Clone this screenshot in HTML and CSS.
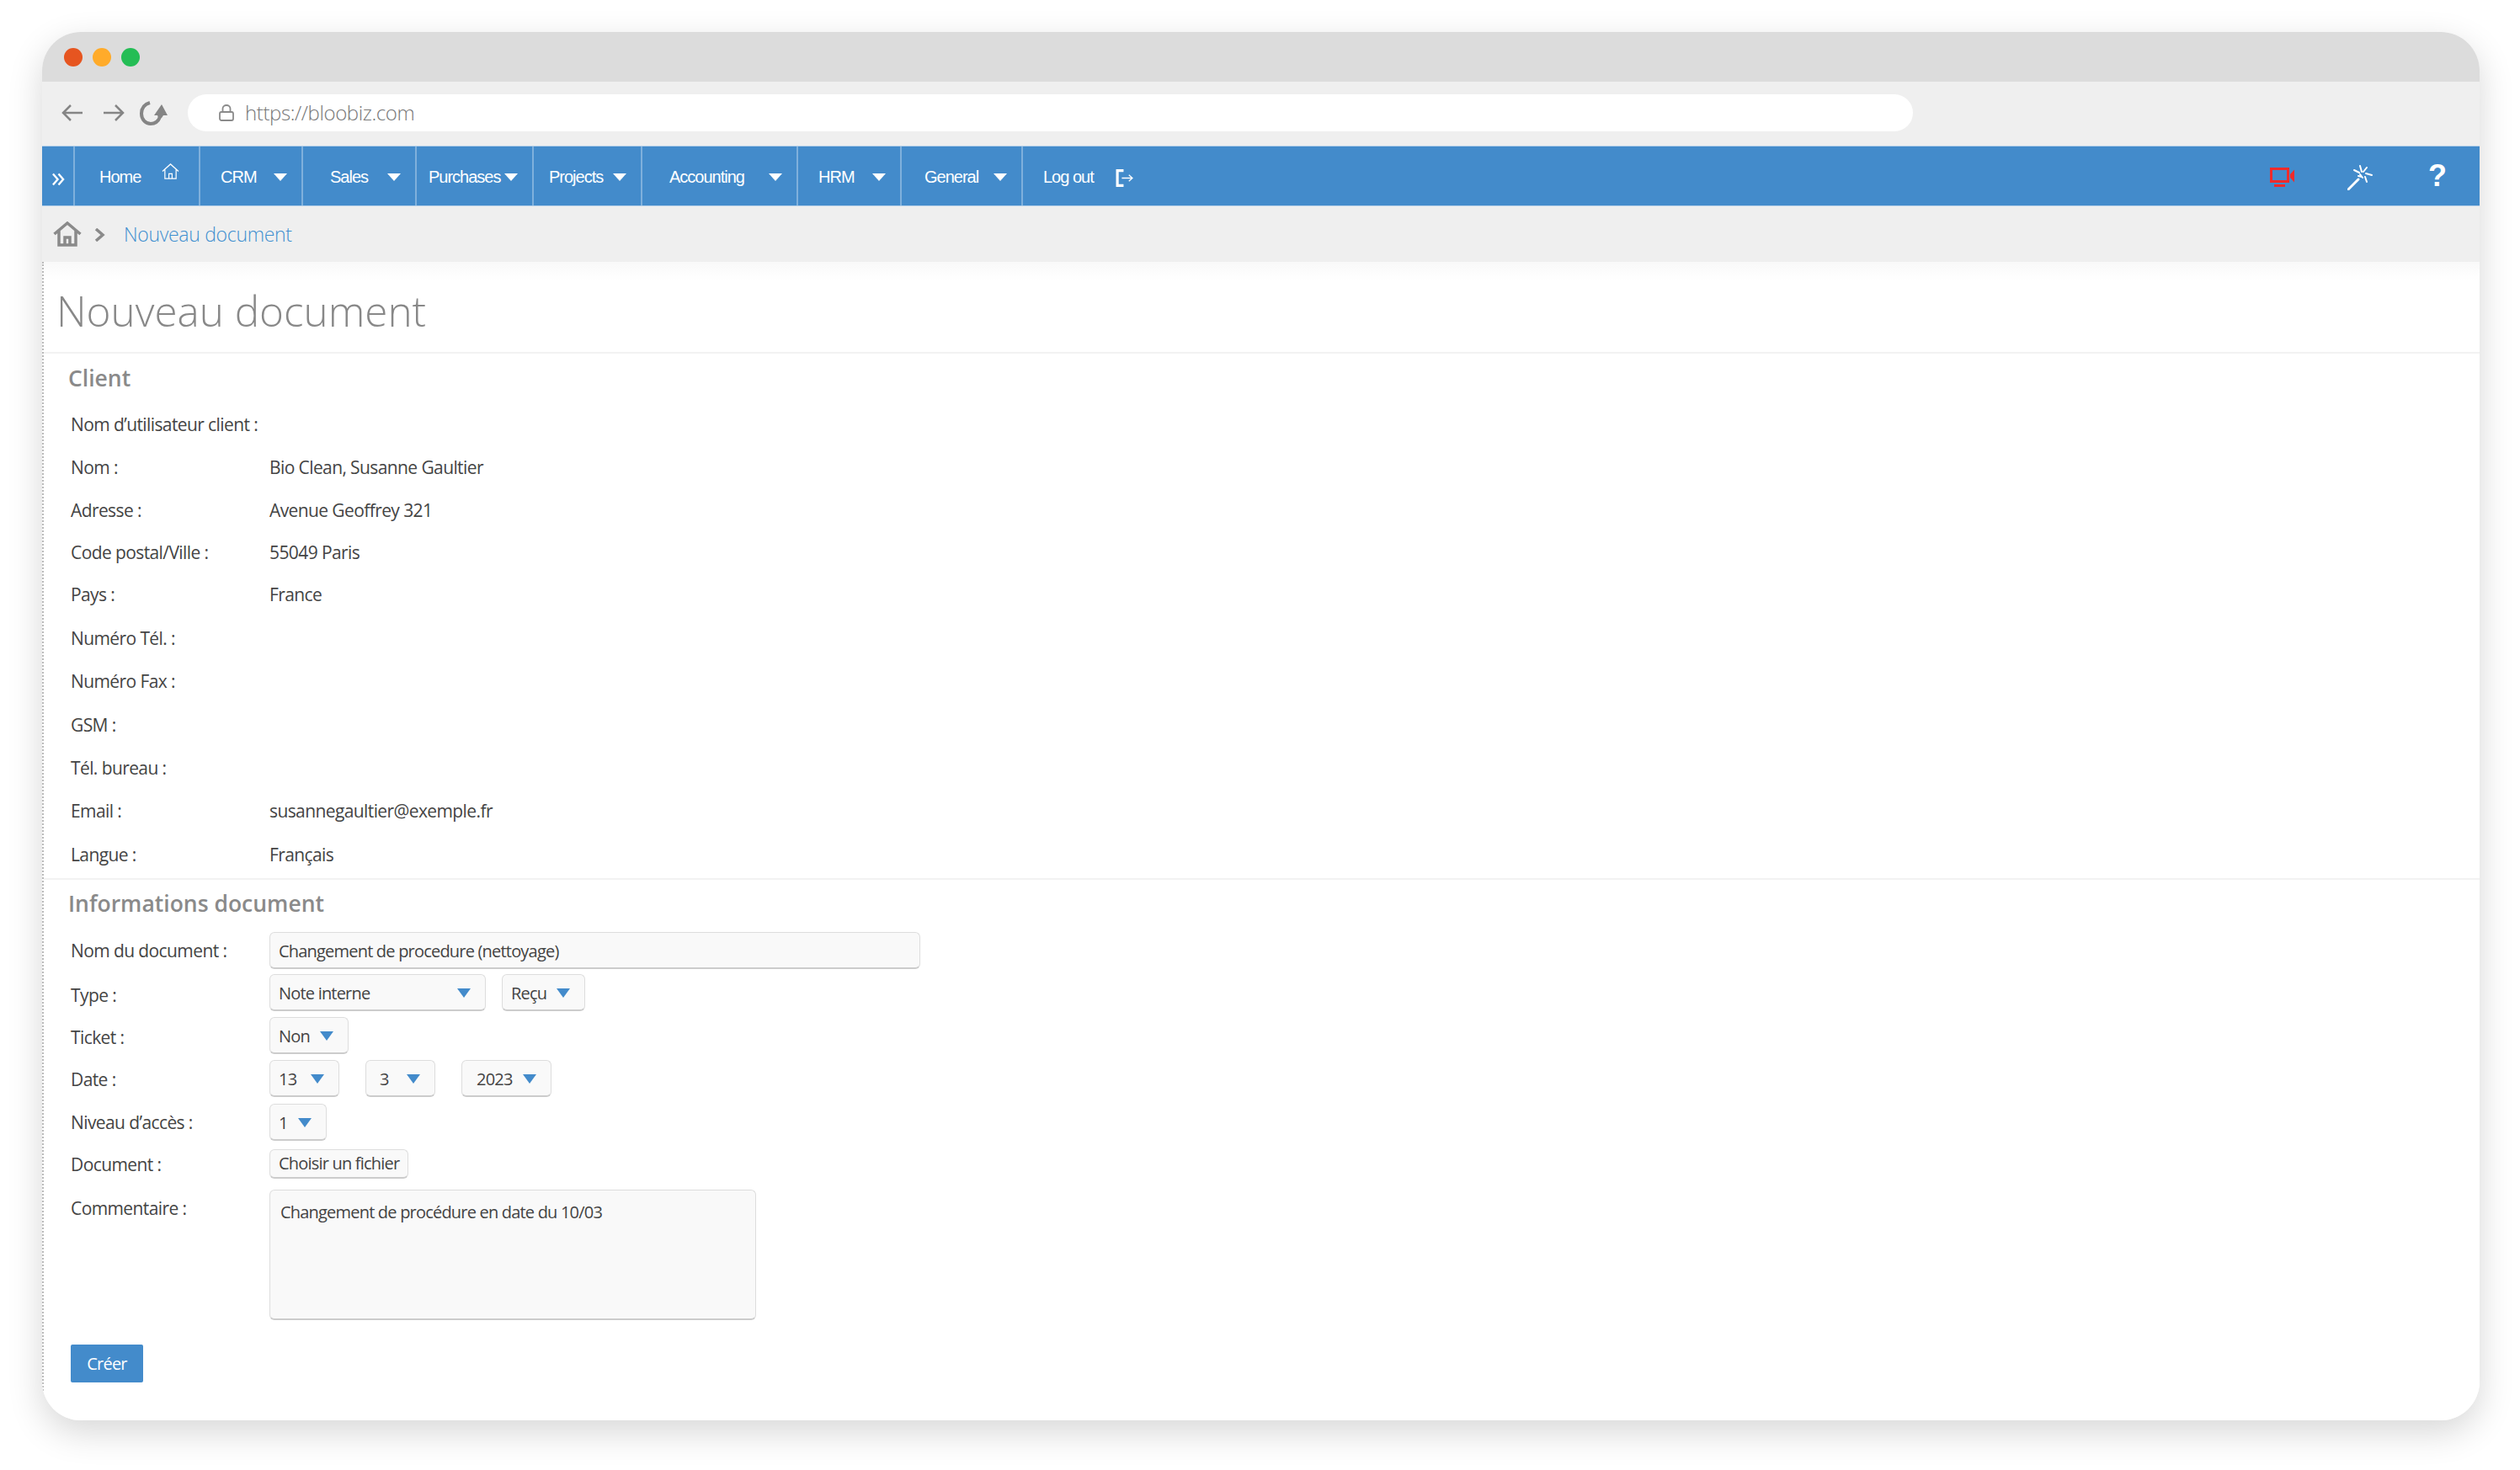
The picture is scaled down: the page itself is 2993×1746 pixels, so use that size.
FILE: index.html
```html
<!DOCTYPE html>
<html lang="fr">
<head>
<meta charset="utf-8">
<title>Nouveau document</title>
<link rel="stylesheet" href="styles.css">
</head>
<body>
<div class="window">
  <div class="titlebar">
    <span class="dot dot-red"></span><span class="dot dot-amber"></span><span class="dot dot-green"></span>
  </div>
  <div class="toolbar">
    <svg class="tool-arrow" viewBox="0 0 26 22"><path d="M25 11H2M11 2l-9 9 9 9"/></svg>
    <svg class="tool-arrow tool-forward" viewBox="0 0 26 22"><path d="M1 11h23M15 2l9 9-9 9"/></svg>
    <svg class="tool-reload" viewBox="0 0 34 30"><path class="reload-arc" d="M13 3C6 5 3 10 3 16c0 7 5 12 11 12 5 0 9-3 11-8"/><path class="reload-head" d="M27 5l7 13h-5l-2 3h-4l-1-3h-4z"/></svg>
    <div class="urlbar">
      <svg class="lock" viewBox="0 0 18 20"><rect x="1" y="9" width="16" height="10" rx="2"/><path d="M4.500 9V5a4.500 4 0 0 1 9 0v4"/></svg>
      <span class="url">https://bloobiz.com</span>
    </div>
  </div>

  <nav class="nav">
    <a class="nav-item nav-toggle">
      <svg class="double-chevron" viewBox="0 0 16 16"><path d="M1 1l6 7-6 7M8 1l6 7-6 7"/></svg>
    </a>
    <a class="nav-item nav-home"><span>Home</span>
      <svg class="home-small" viewBox="0 0 22 20"><path d="M1 10L11 1l10 9M4 8v11h14V8M9 19v-6h4v6"/></svg>
    </a>
    <a class="nav-item nav-crm"><span>CRM</span><i class="nav-caret"></i></a>
    <a class="nav-item nav-sales"><span>Sales</span><i class="nav-caret"></i></a>
    <a class="nav-item nav-purchases"><span>Purchases</span><i class="nav-caret"></i></a>
    <a class="nav-item nav-projects"><span>Projects</span><i class="nav-caret"></i></a>
    <a class="nav-item nav-accounting"><span>Accounting</span><i class="nav-caret"></i></a>
    <a class="nav-item nav-hrm"><span>HRM</span><i class="nav-caret"></i></a>
    <a class="nav-item nav-general"><span>General</span><i class="nav-caret"></i></a>
    <a class="nav-item nav-logout"><span>Log out</span>
      <svg class="logout-icon" viewBox="0 0 20 20"><path class="logout-door" d="M9 1.500H2v17h7"/><path d="M7 10h12M15 6.500l4 3.500-4 3.500"/></svg>
    </a>
    <div class="nav-tools">
      <svg class="video-icon" viewBox="0 0 29 23"><path d="M1.500 1.500h20v15h-20z" fill="none" stroke="#f02b2b" stroke-width="3"/><path d="M5 20h13v3H5zM24 8l5-5.500v15L24 12z" fill="#f02b2b"/></svg>
      <svg class="wand-icon" viewBox="0 0 30 30"><path d="M1 29L13 17" stroke-width="3"/><path d="M15 1l2 7M29 12l-7 -2M23 3l-4 5M8 6l6 3M21 14l2 6M15 11l3 4M13 13l4 1"/></svg>
      <span class="help">?</span>
    </div>
  </nav>

  <div class="breadcrumb">
    <svg class="crumb-home" viewBox="0 0 34 30"><path d="M1.500 15L17 2l15.500 13M7 11v17h20V11M14 28v-9h6v9"/></svg>
    <svg class="crumb-sep" viewBox="0 0 13 16"><path d="M2 1l8 7-8 7"/></svg>
    <span class="crumb-current">Nouveau document</span>
  </div>

  <main class="content">
    <h1 class="page-title">Nouveau document</h1>

    <section class="section-client">
      <h2 class="section-title">Client</h2>
      <dl class="client-grid">
        <dt>Nom d’utilisateur client :</dt><dd></dd>
        <dt>Nom :</dt><dd>Bio Clean, Susanne Gaultier</dd>
        <dt>Adresse :</dt><dd>Avenue Geoffrey 321</dd>
        <dt>Code postal/Ville :</dt><dd>55049 Paris</dd>
        <dt>Pays :</dt><dd>France</dd>
        <dt>Numéro Tél. :</dt><dd></dd>
        <dt>Numéro Fax :</dt><dd></dd>
        <dt>GSM :</dt><dd></dd>
        <dt>Tél. bureau :</dt><dd></dd>
        <dt>Email :</dt><dd>susannegaultier@exemple.fr</dd>
        <dt>Langue :</dt><dd>Français</dd>
      </dl>
    </section>

    <section class="section-doc">
      <h2 class="section-title doc-title">Informations document</h2>
      <form class="doc-grid">
        <label class="field-label">Nom du document :</label>
        <input class="control text-input" type="text" value="Changement de procedure (nettoyage)">

        <label class="field-label nudge-3">Type :</label>
        <div class="control-row gap-type">
          <div class="select w-type"><span>Note interne</span><i class="select-caret"></i></div>
          <div class="select w-recu"><span>Reçu</span><i class="select-caret"></i></div>
        </div>

        <label class="field-label nudge-2">Ticket :</label>
        <div class="control-row">
          <div class="select w-ticket"><span>Non</span><i class="select-caret"></i></div>
        </div>

        <label class="field-label nudge-1">Date :</label>
        <div class="control-row gap-date">
          <div class="select w-day"><span>13</span><i class="select-caret"></i></div>
          <div class="select w-month"><span>3</span><i class="select-caret"></i></div>
          <div class="select w-year"><span>2023</span><i class="select-caret"></i></div>
        </div>

        <label class="field-label">Niveau d’accès :</label>
        <div class="control-row">
          <div class="select w-level"><span>1</span><i class="select-caret"></i></div>
        </div>

        <label class="field-label lift-4">Document :</label>
        <div class="control-row">
          <button class="file-button" type="button">Choisir un fichier</button>
        </div>

        <label class="field-label">Commentaire :</label>
        <textarea class="control comment">Changement de procédure en date du 10/03</textarea>
      </form>
      <button class="submit" type="button">Créer</button>
    </section>
  </main>
</div>
</body>
</html>
```

FILE: styles.css
```css
* { box-sizing: border-box; }

html, body { margin: 0; padding: 0; background: #fff; }

body {
  width: 2993px;
  height: 1746px;
  padding: 38px 0 0 50px;
  overflow: hidden;
  font-family: "Open Sans", sans-serif;
  color: #444;
  font-size: 21px;
  letter-spacing: -0.6px;
}

.window {
  width: 2895px;
  height: 1649px;
  background: #fff;
  border-radius: 46px;
  overflow: hidden;
  box-shadow: 0 14px 42px rgba(0, 0, 0, .16);
  display: flex;
  flex-direction: column;
}

/* Browser chrome */
.titlebar {
  height: 59px;
  flex: none;
  background: #dcdcdc;
  display: flex;
  align-items: center;
  padding: 1px 0 0 26px;
  gap: 12px;
}
.dot { width: 22px; height: 22px; border-radius: 50%; }
.dot-red { background: #e65520; }
.dot-amber { background: #ffab2a; }
.dot-green { background: #24bd55; }

.toolbar {
  height: 76px;
  flex: none;
  background: #efefef;
  display: flex;
  align-items: center;
  padding: 0 0 3px 23px;
}
.tool-arrow { width: 26px; height: 22px; fill: none; stroke: #858585; stroke-width: 2.500; flex: none; }
.tool-forward { margin-left: 23px; }
.tool-reload { width: 34px; height: 30px; margin-left: 17px; flex: none; }
.reload-arc { fill: none; stroke: #858585; stroke-width: 4; }
.reload-head { fill: #858585; }

.urlbar {
  margin-left: 24px;
  width: 2049px;
  height: 44px;
  border-radius: 22px;
  background: #fff;
  display: flex;
  align-items: center;
  padding-left: 37px;
}
.lock { width: 18px; height: 20px; fill: none; stroke: #8a8a8a; stroke-width: 1.800; flex: none; }
.url { margin-left: 13px; font-size: 24px; font-weight: 300; color: #777; letter-spacing: -0.4px; }

/* Main nav */
.nav {
  height: 72px;
  flex: none;
  background: #438bcb;
  border-top: 1px solid #b3cfe8;
  border-bottom: 1px solid #b3cfe8;
  display: flex;
  font-family: "Liberation Sans", sans-serif;
  font-size: 20px;
  letter-spacing: -1px;
  color: #fff;
}
.nav-item {
  display: flex;
  align-items: center;
  justify-content: space-between;
  padding-right: 17px;
  border-right: 2px solid #7fb0dc;
  flex: none;
}
.nav-item span { padding-top: 2px; }
.nav-toggle { width: 39px; padding: 8px 0 0 12px; }
.double-chevron { width: 15px; height: 16px; fill: none; stroke: #fff; stroke-width: 2.500; }
.nav-home { width: 149px; padding-left: 29px; padding-right: 23px; }
.home-small { width: 21px; height: 19px; fill: none; stroke: #fff; stroke-width: 1.300; margin-top: -12px; }
.nav-crm { width: 122px; padding-left: 24px; }
.nav-sales { width: 135px; padding-left: 32px; }
.nav-purchases { width: 139px; padding-left: 14px; }
.nav-projects { width: 129px; padding-left: 18px; }
.nav-accounting { width: 185px; padding-left: 32px; }
.nav-hrm { width: 123px; padding-left: 24px; }
.nav-general { width: 144px; padding-left: 27px; }
.nav-logout { width: 140px; padding-left: 24px; padding-right: 9px; border-right: 0; }
.nav-caret {
  width: 0;
  height: 0;
  border-left: 8px solid transparent;
  border-right: 8px solid transparent;
  border-top: 9px solid #fff;
  margin-top: 3px;
}
.logout-icon { width: 21px; height: 21px; fill: none; stroke: #fff; stroke-width: 1.200; margin-top: 5px; }
.logout-door { stroke-width: 3; }

.nav-tools {
  margin-left: auto;
  display: flex;
  align-items: center;
  padding-right: 41px;
  padding-top: 3px;
}
.video-icon { width: 29px; height: 23px; }
.wand-icon { width: 30px; height: 30px; margin-left: 63px; fill: none; stroke: #fff; stroke-width: 2; stroke-linecap: round; }
.help { margin-left: 66px; font-weight: 700; font-size: 36px; letter-spacing: 0; line-height: 1; margin-top: -4px; width: 20px; }

/* Breadcrumb */
.breadcrumb {
  height: 66px;
  flex: none;
  background: #efefef;
  display: flex;
  align-items: center;
  padding-left: 13px;
}
.crumb-home { width: 34px; height: 30px; fill: none; stroke: #8a8a8a; stroke-width: 3.500; }
.crumb-sep { width: 13px; height: 16px; margin-left: 15px; margin-top: 2px; fill: none; stroke: #8a8a8a; stroke-width: 3.500; }
.crumb-current { margin-left: 22px; font-size: 23px; font-weight: 300; color: #3f8fd0; letter-spacing: -0.3px; }

/* Content */
.content {
  flex: 1;
  background: linear-gradient(#f9f9f9 0, #fff 22px);
  border-left: 2px dotted #bbb;
}
.page-title {
  margin: 0;
  height: 109px;
  padding: 24px 0 0 15px;
  border-bottom: 2px solid #f2f2f2;
  font-size: 49.400px;
  line-height: 68px;
  font-weight: 300;
  letter-spacing: 0;
  color: #888;
}
.section-title {
  margin: 0;
  height: 58px;
  padding-left: 29px;
  line-height: 58px;
  font-size: 26.500px;
  font-weight: 600;
  letter-spacing: 0;
  color: #8a8a8a;
}
.client-grid {
  margin: 0;
  padding-left: 32px;
  display: grid;
  grid-template-columns: 236px 1fr;
  grid-template-rows: 51px 51px 50px 50px 51px 52px 51px 52px 50px 53px 50px;
  align-items: center;
}
.client-grid dt, .client-grid dd { margin: 0; padding-top: 1px; white-space: nowrap; }

.section-doc {
  margin-top: 4px;
  border-top: 2px solid #f2f2f2;
}
.doc-title { height: 56px; line-height: 56px; }
.doc-grid {
  margin-top: 6px;
  padding-left: 32px;
  display: grid;
  grid-template-columns: 236px 1fr;
  grid-template-rows: 50px 51px 51px 52px 54px 48px 155px;
  align-items: start;
}
.field-label { line-height: 45px; white-space: nowrap; }
.nudge-1 { padding-top: 1px; }
.nudge-2 { padding-top: 2px; }
.nudge-3 { padding-top: 3px; }
.lift-4 { margin-top: -4px; }

.control, .select, .file-button {
  font: inherit;
  font-size: 20px;
  letter-spacing: -0.8px;
  color: inherit;
  background: #f9f9f9;
  border: 1.500px solid #ddd;
  border-bottom-color: #ccc;
  border-bottom-width: 2px;
  border-radius: 6px;
}
.text-input { width: 773px; height: 44px; padding: 2px 10px 0; }
.comment { width: 578px; height: 155px; padding: 12px 12px; resize: none; display: block; }
.control-row { display: flex; }
.gap-type { gap: 19px; }
.gap-date { gap: 31px; }
.select {
  height: 44px;
  display: flex;
  align-items: center;
  justify-content: space-between;
  padding: 1px 17px 0 10px;
}
.select-caret {
  width: 0;
  height: 0;
  border-left: 8px solid transparent;
  border-right: 8px solid transparent;
  border-top: 11px solid #438bcb;
}
.w-type { width: 257px; }
.w-recu { width: 99px; }
.w-ticket { width: 94px; }
.w-day { width: 83px; }
.w-month { width: 83px; padding-left: 16px; }
.w-year { width: 107px; padding-left: 17px; }
.w-level { width: 68px; }
.file-button { height: 35px; width: 165px; padding: 0 0 0 10px; text-align: left; line-height: 30px; }

.submit {
  display: block;
  margin: 29px 0 0 32px;
  width: 86px;
  height: 45px;
  border: 0;
  border-radius: 2px;
  background: #438bcb;
  color: #fff;
  font: inherit;
  font-size: 20px;
  letter-spacing: -0.8px;
}
```
